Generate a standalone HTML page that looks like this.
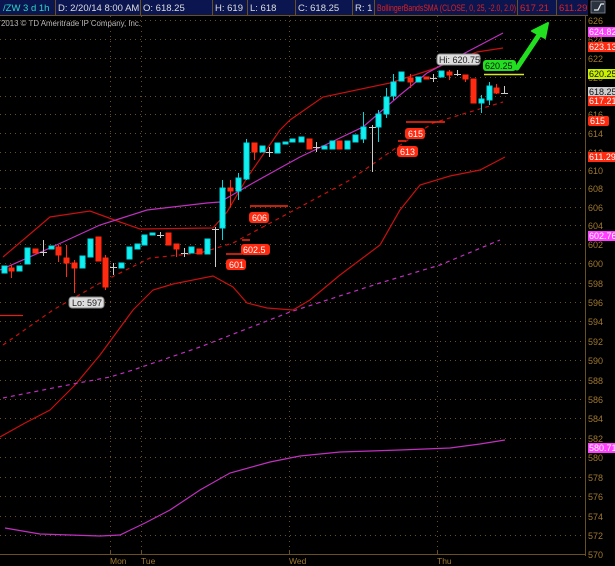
<!DOCTYPE html>
<html><head><meta charset="utf-8"><style>
html,body{margin:0;padding:0;background:#000;width:615px;height:566px;overflow:hidden}
svg{display:block;font-family:"Liberation Sans",sans-serif}
</style></head><body>
<svg width="615" height="566" viewBox="0 0 615 566" xmlns="http://www.w3.org/2000/svg">
<rect width="615" height="566" fill="#000"/>
<rect x="0" y="0" width="588" height="15" fill="#0b1650"/>
<g stroke="#6a5020" stroke-width="1">
<line x1="55.5" y1="0" x2="55.5" y2="15"/><line x1="140.5" y1="0" x2="140.5" y2="15"/><line x1="212.5" y1="0" x2="212.5" y2="15"/><line x1="247.5" y1="0" x2="247.5" y2="15"/><line x1="295.5" y1="0" x2="295.5" y2="15"/><line x1="352.5" y1="0" x2="352.5" y2="15"/><line x1="374.5" y1="0" x2="374.5" y2="15"/><line x1="517.5" y1="0" x2="517.5" y2="15"/><line x1="556.5" y1="0" x2="556.5" y2="15"/>
<line x1="0" y1="15.5" x2="588" y2="15.5"/>
</g>
<g font-size="9.5" fill="#ddd">
<text x="3" y="11" fill="#29d9c8">/ZW 3 d 1h</text>
<text x="58" y="11">D: 2/20/14 8:00 AM</text>
<text x="143" y="11">O: 618.25</text>
<text x="215" y="11">H: 619</text>
<text x="250" y="11">L: 618</text>
<text x="298" y="11">C: 618.25</text>
<text x="355" y="11">R: 1</text>
<text x="377" y="11" fill="#e02020" textLength="139" lengthAdjust="spacingAndGlyphs">BollingerBandsSMA (CLOSE, 0, 25, -2.0, 2.0)</text>
<text x="520" y="11" fill="#e02020">617.21</text>
<text x="559" y="11" fill="#e02020">611.29</text>
</g>
<rect x="591" y="1" width="14" height="12" fill="#2a3340" stroke="#889" stroke-width="0.8"/>
<path d="M594 10 L598 10 L601 4 L604 4" stroke="#eee" fill="none" stroke-width="1.2"/>
<text x="1" y="26" font-size="8.5" fill="#bbb" textLength="140" lengthAdjust="spacingAndGlyphs">2013 © TD Ameritrade IP Company, Inc.</text>
<g stroke="#6a5020" stroke-width="1" stroke-dasharray="1,4">
<line x1="0" y1="20.5" x2="585" y2="20.5"/><line x1="0" y1="39.5" x2="585" y2="39.5"/><line x1="0" y1="58.5" x2="585" y2="58.5"/><line x1="0" y1="77.5" x2="585" y2="77.5"/><line x1="0" y1="96.5" x2="585" y2="96.5"/><line x1="0" y1="114.5" x2="585" y2="114.5"/><line x1="0" y1="133.5" x2="585" y2="133.5"/><line x1="0" y1="152.5" x2="585" y2="152.5"/><line x1="0" y1="170.5" x2="585" y2="170.5"/><line x1="0" y1="188.5" x2="585" y2="188.5"/><line x1="0" y1="207.5" x2="585" y2="207.5"/><line x1="0" y1="225.5" x2="585" y2="225.5"/><line x1="0" y1="244.5" x2="585" y2="244.5"/><line x1="0" y1="263.5" x2="585" y2="263.5"/><line x1="0" y1="283.5" x2="585" y2="283.5"/><line x1="0" y1="302.5" x2="585" y2="302.5"/><line x1="0" y1="321.5" x2="585" y2="321.5"/><line x1="0" y1="341.5" x2="585" y2="341.5"/><line x1="0" y1="360.5" x2="585" y2="360.5"/><line x1="0" y1="380.5" x2="585" y2="380.5"/><line x1="0" y1="399.5" x2="585" y2="399.5"/><line x1="0" y1="418.5" x2="585" y2="418.5"/><line x1="0" y1="438.5" x2="585" y2="438.5"/><line x1="0" y1="457.5" x2="585" y2="457.5"/><line x1="0" y1="477.5" x2="585" y2="477.5"/><line x1="0" y1="496.5" x2="585" y2="496.5"/><line x1="0" y1="516.5" x2="585" y2="516.5"/><line x1="0" y1="535.5" x2="585" y2="535.5"/>
<line x1="110.5" y1="16" x2="110.5" y2="554"/><line x1="141.5" y1="16" x2="141.5" y2="554"/><line x1="289.5" y1="16" x2="289.5" y2="554"/><line x1="437.5" y1="16" x2="437.5" y2="554"/>
</g>
<g stroke="#6a5020" stroke-width="1">
<line x1="585.5" y1="16" x2="585.5" y2="556"/>
<line x1="0" y1="554.5" x2="586" y2="554.5"/>
<line x1="110.5" y1="550" x2="110.5" y2="555"/><line x1="141.5" y1="550" x2="141.5" y2="555"/><line x1="289.5" y1="550" x2="289.5" y2="555"/><line x1="437.5" y1="550" x2="437.5" y2="555"/>
</g>
<g font-size="8.5" fill="#a07830">
<text x="110" y="564">Mon</text><text x="141" y="564">Tue</text><text x="289" y="564">Wed</text><text x="437" y="564">Thu</text>
</g>
<g font-size="9" fill="#a07830">
<text x="588" y="24">626</text><text x="588" y="43">624</text><text x="588" y="62">622</text><text x="588" y="81">620</text><text x="588" y="100">618</text><text x="588" y="118">616</text><text x="588" y="137">614</text><text x="588" y="156">612</text><text x="588" y="174">610</text><text x="588" y="192">608</text><text x="588" y="211">606</text><text x="588" y="229">604</text><text x="588" y="248">602</text><text x="588" y="267">600</text><text x="588" y="287">598</text><text x="588" y="306">596</text><text x="588" y="325">594</text><text x="588" y="345">592</text><text x="588" y="364">590</text><text x="588" y="384">588</text><text x="588" y="403">586</text><text x="588" y="422">584</text><text x="588" y="442">582</text><text x="588" y="461">580</text><text x="588" y="481">578</text><text x="588" y="500">576</text><text x="588" y="520">574</text><text x="588" y="539">572</text><text x="588" y="558">570</text>
</g>
<g fill="none" stroke-width="1.2">
<polyline stroke="#c81010" points="3,257 50,217 90,211 120,222 140,229 213,228 227,212 247,178 280,130 290,120 323,97 390,83 430,70 477,52 503,48"/>
<polyline stroke="#c81010" points="0,437 25,423 50,410 75,385 100,355 133,310 153,290 173,284 213,276 233,287 247,303 267,308 293,310 310,300 340,275 380,245 400,210 420,185 450,176 480,170 505,157"/>
<polyline stroke="#c81010" stroke-dasharray="4,4" points="3,345 53,310 100,283 150,258 200,253 233,243 300,207 350,180 390,152 433,123 503,102"/>
<polyline stroke="#c030c0" points="0,270 50,248 100,225 147,210 207,203 220,202 253,183 280,168 300,157 363,127 400,95 427,73 503,33"/>
<polyline stroke="#c030c0" stroke-dasharray="4,4" points="3,398 73,384 110,377 133,370 200,347 290,312 380,283 440,265 500,240"/>
<polyline stroke="#c030c0" points="5,528 40,534 100,536 120,535 145,523 170,510 200,490 230,473 270,462 300,456 340,452 400,450 450,448 480,444 505,440"/>
<line stroke="#e02010" x1="0" y1="315.5" x2="23" y2="315.5"/>
</g>
<g stroke-width="1">
<g stroke="#00d8e0" fill="#10f0f0">
<rect x="2" y="266" width="5" height="7"/><rect x="17" y="266" width="5" height="5"/><rect x="25" y="248" width="5" height="16"/><rect x="49" y="246" width="5" height="3"/><rect x="80" y="256" width="5" height="12"/><rect x="88" y="239" width="5" height="18"/><rect x="119" y="263" width="5" height="5"/><rect x="127" y="247" width="5" height="12"/><rect x="135" y="244" width="5" height="5"/><rect x="142" y="235" width="5" height="10"/><rect x="150" y="233" width="5" height="2"/><rect x="189" y="247" width="5" height="6"/><rect x="205" y="239" width="5" height="15"/>
<line x1="222.5" y1="180" x2="222.5" y2="240"/><rect x="220" y="188" width="5" height="40"/>
<line x1="238.5" y1="173" x2="238.5" y2="200"/><rect x="236" y="178" width="5" height="13"/>
<line x1="246.5" y1="139" x2="246.5" y2="180"/><rect x="244" y="143" width="5" height="36"/>
<rect x="260" y="146" width="5" height="6"/><rect x="275" y="143" width="5" height="10"/><rect x="283" y="142" width="5" height="2"/><rect x="290" y="139" width="5" height="3"/><rect x="299" y="137" width="5" height="5"/><rect x="322" y="146" width="5" height="3"/><rect x="330" y="141" width="5" height="8"/><rect x="345" y="141" width="5" height="8"/><rect x="353" y="135" width="5" height="7"/>
<line x1="363.5" y1="112" x2="363.5" y2="143"/><rect x="361" y="127" width="5" height="12"/>
<line x1="378.5" y1="110" x2="378.5" y2="142"/><rect x="376" y="114" width="5" height="13"/>
<line x1="386.5" y1="88" x2="386.5" y2="118"/><rect x="384" y="97" width="5" height="17"/>
<line x1="393.5" y1="74" x2="393.5" y2="100"/><rect x="391" y="82" width="5" height="14"/>
<rect x="399" y="72" width="5" height="9"/><rect x="416" y="77" width="5" height="5"/><rect x="439" y="71" width="5" height="6"/>
<line x1="481.5" y1="95" x2="481.5" y2="113"/><rect x="479" y="99" width="5" height="4"/>
<line x1="489.5" y1="82" x2="489.5" y2="105"/><rect x="487" y="86" width="5" height="14"/>
</g>
<g stroke="#ff2a10" fill="#ff2a10">
<line x1="11.5" y1="265" x2="11.5" y2="278"/><rect x="9" y="268" width="5" height="3"/>
<rect x="33" y="249" width="5" height="4"/><line x1="58.5" y1="245" x2="58.5" y2="262"/><rect x="56" y="247" width="5" height="8"/>
<line x1="66.5" y1="245" x2="66.5" y2="277"/><rect x="64" y="258" width="5" height="5"/>
<line x1="74.5" y1="260" x2="74.5" y2="293"/><rect x="72" y="263" width="5" height="5"/>
<rect x="96" y="237" width="5" height="24"/><line x1="105.5" y1="255" x2="105.5" y2="290"/><rect x="103" y="258" width="5" height="29"/>
<rect x="166" y="233" width="5" height="12"/><line x1="176.5" y1="244" x2="176.5" y2="257"/><rect x="174" y="244" width="5" height="5"/>
<rect x="197" y="249" width="5" height="5"/><line x1="230.5" y1="180" x2="230.5" y2="207"/><rect x="228" y="188" width="5" height="3"/>
<line x1="254.5" y1="143" x2="254.5" y2="160"/><rect x="252" y="143" width="5" height="9"/>
<rect x="307" y="139" width="5" height="10"/><rect x="337" y="141" width="5" height="8"/>
<line x1="410.5" y1="74" x2="410.5" y2="88"/><rect x="408" y="78" width="5" height="4"/>
<rect x="424" y="77" width="5" height="2"/><line x1="449.5" y1="70" x2="449.5" y2="80"/><rect x="447" y="72" width="5" height="3"/>
<line x1="465.5" y1="75" x2="465.5" y2="82"/><rect x="463" y="75" width="5" height="4"/>
<rect x="471" y="79" width="5" height="24"/><line x1="496.5" y1="84" x2="496.5" y2="94"/><rect x="494" y="88" width="5" height="5"/>
</g>
<g stroke="#ccc">
<line x1="43.5" y1="240" x2="43.5" y2="256"/><line x1="40" y1="252.5" x2="47" y2="252.5"/>
<line x1="113.5" y1="263" x2="113.5" y2="275"/><line x1="110" y1="267.5" x2="117" y2="267.5"/>
<line x1="160.5" y1="232" x2="160.5" y2="238"/><line x1="157" y1="235.5" x2="164" y2="235.5"/>
<line x1="184.5" y1="248" x2="184.5" y2="257"/><line x1="181" y1="253.5" x2="188" y2="253.5"/>
<line x1="215.5" y1="227" x2="215.5" y2="267"/><line x1="212" y1="229.5" x2="219" y2="229.5"/>
<line x1="269.5" y1="147" x2="269.5" y2="157"/><line x1="266" y1="152.5" x2="273" y2="152.5"/>
<line x1="316.5" y1="142" x2="316.5" y2="152"/><line x1="313" y1="147.5" x2="320" y2="147.5"/>
<line x1="372.5" y1="125" x2="372.5" y2="172"/><line x1="369" y1="127.5" x2="376" y2="127.5"/>
<line x1="433.5" y1="74" x2="433.5" y2="82"/><line x1="430" y1="78.5" x2="437" y2="78.5"/>
<line x1="457.5" y1="70" x2="457.5" y2="76"/><line x1="454" y1="74.5" x2="461" y2="74.5"/>
<line x1="504.5" y1="86" x2="504.5" y2="94"/><line x1="501" y1="93.5" x2="508" y2="93.5"/>
</g>
</g>
<g stroke="#ff2a10" stroke-width="1.5" fill="none">
<line x1="250" y1="206" x2="288" y2="206"/><line x1="406" y1="122" x2="445" y2="122"/>
<line x1="226" y1="254" x2="242" y2="254"/><line x1="242" y1="240" x2="250" y2="240"/><line x1="398" y1="141" x2="406" y2="141"/>
</g>
<line x1="484" y1="74.5" x2="524" y2="74.5" stroke="#d8e820" stroke-width="1.5"/>
<g font-size="9">
<rect x="69" y="297" width="35" height="11" rx="3" fill="#ddd" stroke="#888"/><text x="72" y="306" fill="#222">Lo: 597</text>
<rect x="226" y="259" width="20" height="11" rx="3" fill="#ff2a10"/><text x="229" y="268" fill="#fff">601</text>
<rect x="241" y="244" width="29" height="11" rx="3" fill="#ff2a10"/><text x="243" y="253" fill="#fff">602.5</text>
<rect x="249" y="212" width="20" height="11" rx="3" fill="#ff2a10"/><text x="252" y="221" fill="#fff">606</text>
<rect x="405" y="128" width="20" height="11" rx="3" fill="#ff2a10"/><text x="408" y="137" fill="#fff">615</text>
<rect x="397" y="146" width="21" height="11" rx="3" fill="#ff2a10"/><text x="400" y="155" fill="#fff">613</text>
<rect x="437" y="54" width="43" height="11" rx="3" fill="#ddd" stroke="#888"/><text x="439" y="63" fill="#222">Hi: 620.75</text>
<rect x="483" y="60" width="33" height="11" rx="3" fill="#22e020"/><text x="485" y="69" fill="#111">620.25</text>
</g>
<path d="M517 68 L541 32" stroke="#22e020" stroke-width="5" stroke-linecap="round"/>
<path d="M548 23 L532 31 L545 38 Z" fill="#22e020" stroke="#22e020" stroke-width="2" stroke-linejoin="round"/>
<g font-size="9">
<rect x="588" y="27" width="27" height="10" fill="#ff40ff"/><text x="589" y="35" fill="#fff">624.82</text>
<rect x="588" y="42" width="27" height="10" fill="#ff2a10"/><text x="589" y="50" fill="#fff">623.13</text>
<rect x="588" y="69" width="27" height="10" fill="#c8f000"/><text x="589" y="77" fill="#111">620.25</text>
<rect x="588" y="87" width="27" height="10" fill="#ccc"/><text x="589" y="95" fill="#111">618.25</text>
<rect x="588" y="96" width="27" height="10" fill="#ff2a10"/><text x="589" y="104" fill="#fff">617.21</text>
<rect x="588" y="116" width="21" height="10" rx="2" fill="#ff2a10"/><text x="590" y="124" fill="#fff">615</text>
<rect x="588" y="152" width="27" height="10" fill="#ff2a10"/><text x="589" y="160" fill="#fff">611.29</text>
<rect x="588" y="231" width="27" height="10" fill="#ff40ff"/><text x="589" y="239" fill="#fff">602.76</text>
<rect x="588" y="443" width="27" height="10" fill="#ff40ff"/><text x="589" y="451" fill="#fff">580.71</text>
</g>
</svg>
</body></html>
